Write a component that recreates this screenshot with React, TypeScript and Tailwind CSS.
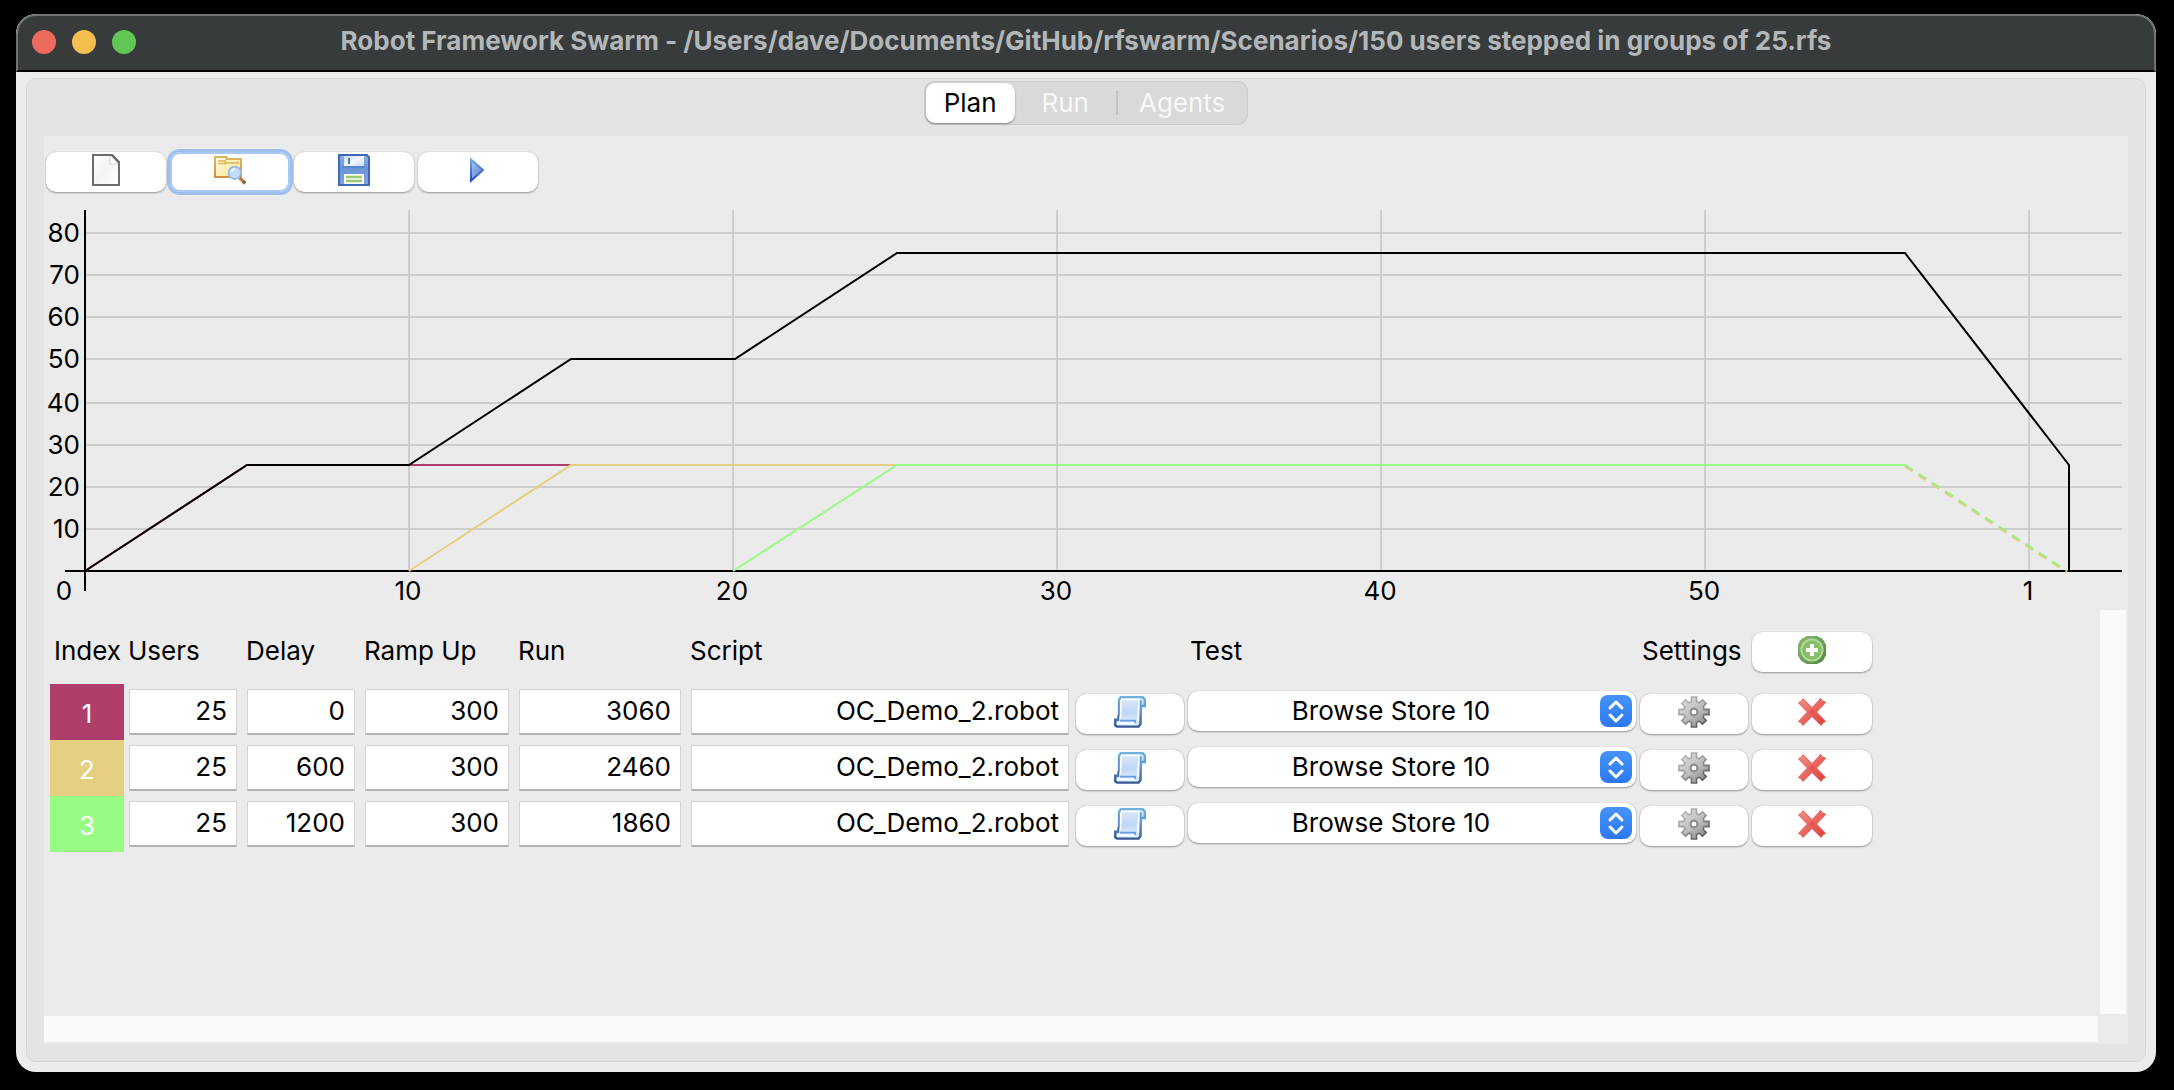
import React, { useState } from 'react';

type Row = {
  index: number;
  color: string;
  users: string;
  delay: string;
  rampUp: string;
  run: string;
  script: string;
  test: string;
};

const ROWS: Row[] = [
  { index: 1, color: 'bg-[#af3f6a]', users: '25', delay: '0', rampUp: '300', run: '3060', script: 'OC_Demo_2.robot', test: 'Browse Store 10' },
  { index: 2, color: 'bg-[#e5cf80]', users: '25', delay: '600', rampUp: '300', run: '2460', script: 'OC_Demo_2.robot', test: 'Browse Store 10' },
  { index: 3, color: 'bg-[#98fb84]', users: '25', delay: '1200', rampUp: '300', run: '1860', script: 'OC_Demo_2.robot', test: 'Browse Store 10' },
];

const TITLE =
  'Robot Framework Swarm - /Users/dave/Documents/GitHub/rfswarm/Scenarios/150 users stepped in groups of 25.rfs';

/* ---------- icons, all on a 16 unit grid ---------- */

function Icon({ children }: { children: React.ReactNode }) {
  return (
    <svg viewBox="0 0 16 16" className="size-8 shrink-0" aria-hidden="true">
      {children}
    </svg>
  );
}

function NewIcon() {
  return (
    <Icon>
      <defs>
        <linearGradient id="paper" x1="0" y1="0" x2="1" y2="1">
          <stop offset="0" stopColor="#ffffff" />
          <stop offset="0.5" stopColor="#f4f4f4" />
          <stop offset="1" stopColor="#ffffff" />
        </linearGradient>
      </defs>
      <path d="M1.5 0.5H11L14.5 4.2V15.5H1.5Z" fill="url(#paper)" stroke="#6c6c6c" />
      <path d="M10 1V5H14" fill="#ffffff" stroke="#e2e2e2" strokeWidth="0.8" />
      <path d="M11 0.5L14.5 4.2" stroke="#6c6c6c" strokeWidth="1.2" />
    </Icon>
  );
}

function OpenIcon() {
  return (
    <Icon>
      <defs>
        <linearGradient id="folder" x1="0" y1="0" x2="1" y2="1">
          <stop offset="0" stopColor="#fffbe8" />
          <stop offset="0.6" stopColor="#fbeeb0" />
          <stop offset="1" stopColor="#f0d46c" />
        </linearGradient>
        <linearGradient id="folderEdge" x1="0" y1="0" x2="0" y2="1">
          <stop offset="0" stopColor="#dcb95c" />
          <stop offset="1" stopColor="#cf8f41" />
        </linearGradient>
      </defs>
      <path d="M0.5 1.5H6.3V2.5H13.5V11.5H0.5Z" fill="url(#folder)" stroke="url(#folderEdge)" />
      <path d="M2 3.4H5.6V4.4H12V3.6" fill="none" stroke="#e3bd62" strokeWidth="0.9" />
      <path d="M2.2 4.8H6" stroke="#e3bd62" strokeWidth="0.9" />
      <path d="M12.8 12L15.4 14.4" stroke="#b98352" strokeWidth="1.8" />
      <path d="M14.4 13.6L15.6 14.8" stroke="#94653c" strokeWidth="1.6" />
      <circle cx="10.4" cy="9.4" r="3.1" fill="#c3dcf6" stroke="#98b9e0" strokeWidth="0.9" />
      <path d="M8.7 9A2 2 0 0 1 10.6 7.4" fill="none" stroke="#e8f3fd" strokeWidth="0.9" />
    </Icon>
  );
}

function SaveIcon() {
  return (
    <Icon>
      <defs>
        <linearGradient id="disk" x1="0" y1="0" x2="0" y2="1">
          <stop offset="0" stopColor="#8fb2e6" />
          <stop offset="0.45" stopColor="#6a94d8" />
          <stop offset="1" stopColor="#86a6dc" />
        </linearGradient>
        <linearGradient id="shutter" x1="0" y1="0" x2="1" y2="1">
          <stop offset="0" stopColor="#c9d8f0" />
          <stop offset="0.5" stopColor="#f3f7fd" />
          <stop offset="1" stopColor="#cddcf3" />
        </linearGradient>
      </defs>
      <path d="M0.5 0.5H14.4L15.5 1.6V15.5H0.5Z" fill="url(#disk)" stroke="#4068b4" />
      <path d="M3 1H13V6H3Z" fill="url(#shutter)" />
      <path d="M5 2H6V5H5Z" fill="#4a72bd" />
      <path d="M2.5 6.5H13.5" stroke="#5580cc" strokeWidth="0.7" />
      <path d="M3 10H13V15H3Z" fill="#fbfdf8" />
      <path d="M4 11.5H12M4 13.5H12" stroke="#9cc777" strokeWidth="1.2" />
    </Icon>
  );
}

function PlayIcon() {
  return (
    <Icon>
      <defs>
        <linearGradient id="play" x1="0" y1="0" x2="1" y2="1">
          <stop offset="0" stopColor="#a9c6f0" />
          <stop offset="1" stopColor="#4f83d8" />
        </linearGradient>
        <linearGradient id="playEdge" x1="0" y1="0" x2="0" y2="1">
          <stop offset="0" stopColor="#7aa4e3" />
          <stop offset="1" stopColor="#1d4fbf" />
        </linearGradient>
      </defs>
      <path d="M4.5 2.7L10.5 8L4.5 13.4Z" fill="url(#play)" stroke="url(#playEdge)" strokeWidth="1" />
    </Icon>
  );
}

function ScriptIcon() {
  return (
    <Icon>
      <defs>
        <linearGradient id="sheet" x1="0" y1="0" x2="0" y2="1">
          <stop offset="0" stopColor="#dcebfb" />
          <stop offset="0.5" stopColor="#bfd8f5" />
          <stop offset="1" stopColor="#e2eefb" />
        </linearGradient>
        <linearGradient id="sheetEdge" x1="0" y1="0" x2="0" y2="1">
          <stop offset="0" stopColor="#6fb0e0" />
          <stop offset="0.5" stopColor="#5b93cf" />
          <stop offset="1" stopColor="#34588f" />
        </linearGradient>
      </defs>
      <path
        d="M3.4 0.6H14.4L15.4 1.7V5H13.5L13.2 14.2L12.3 15.3H1.5L0.6 14.6V11.9H1.9L2.5 9L2.5 1.8Z"
        fill="url(#sheet)"
        stroke="url(#sheetEdge)"
        strokeWidth="1.2"
      />
      <path d="M3.5 1.7H13M3.5 2L3.2 11.5M12.4 2.6L12 12.4M2 13.6H11" stroke="#ffffff" strokeWidth="0.8" fill="none" />
      <path d="M3 12.3H10.6V13.6" stroke="#6d9be0" strokeWidth="0.9" fill="none" />
      <path d="M13.4 2.2V5" stroke="#5b9fd8" strokeWidth="0.9" />
    </Icon>
  );
}

function GearIcon() {
  return (
    <Icon>
      <defs>
        <linearGradient id="gear" gradientUnits="userSpaceOnUse" x1="2" y1="1" x2="13" y2="15">
          <stop offset="0" stopColor="#dedede" />
          <stop offset="0.55" stopColor="#bdbdbd" />
          <stop offset="1" stopColor="#8a8a8a" />
        </linearGradient>
        <linearGradient id="gearEdge" gradientUnits="userSpaceOnUse" x1="2" y1="1" x2="13" y2="15">
          <stop offset="0" stopColor="#bcbcbc" />
          <stop offset="0.5" stopColor="#989898" />
          <stop offset="1" stopColor="#505050" />
        </linearGradient>
      </defs>
      <path
        d="M6.7 0.5H9.3V2.9L10.6 3.4L12.2 1.9L14.1 3.8L12.6 5.4L13.1 6.7H15.5V9.3H13.1L12.6 10.6L14.1 12.2L12.2 14.1L10.6 12.6L9.3 13.1V15.5H6.7V13.1L5.4 12.6L3.8 14.1L1.9 12.2L3.4 10.6L2.9 9.3H0.5V6.7H2.9L3.4 5.4L1.9 3.8L3.8 1.9L5.4 3.4L6.7 2.9Z"
        fill="url(#gear)"
        stroke="url(#gearEdge)"
        strokeWidth="0.8"
      />
      <circle cx="8" cy="8" r="1.7" fill="#ffffff" stroke="#8e8e8e" strokeWidth="1.1" />
    </Icon>
  );
}

function DeleteIcon() {
  return (
    <Icon>
      <defs>
        <linearGradient id="cross" x1="0" y1="0" x2="1" y2="1">
          <stop offset="0" stopColor="#f3908a" />
          <stop offset="0.5" stopColor="#ea6661" />
          <stop offset="1" stopColor="#dc3a33" />
        </linearGradient>
      </defs>
      <path
        d="M3.6 1.2L4.6 2.4L8 5.8L11.4 2.2L12.2 1.1L13.2 2.4L14.8 3L13.8 4.4L10.3 8L13.8 11.6L14.8 12.8L13.4 13.4L12.6 14.8L11.4 13.6L8 10.3L4.6 13.6L3.4 14.8L2.6 13.4L1.2 12.8L2.4 11.4L5.7 8L2.2 4.5L1.2 3.4L2.6 2.6Z"
        fill="url(#cross)"
        stroke="#e4564f"
        strokeWidth="0.4"
      />
      <path d="M6.9 6.9H9.1V9.1H6.9Z" fill="#e9524d" />
    </Icon>
  );
}

function AddIcon() {
  return (
    <Icon>
      <defs>
        <linearGradient id="add" x1="0" y1="0" x2="1" y2="1">
          <stop offset="0" stopColor="#8aba76" />
          <stop offset="1" stopColor="#4d873c" />
        </linearGradient>
      </defs>
      <path
        d="M5.4 1H10.6L12.9 2.2L13.8 3.1L15 5.4V10.6L13.8 12.9L12.9 13.8L10.6 15H5.4L3.1 13.8L2.2 12.9L1 10.6V5.4L2.2 3.1L3.1 2.2Z"
        fill="url(#add)"
      />
      <circle cx="8" cy="8" r="5.3" fill="#86bd68" stroke="#b3d99b" strokeWidth="0.9" />
      <path d="M8 5V11M5 8H11" stroke="#ffffff" strokeWidth="2" />
    </Icon>
  );
}

/* ---------- controls ---------- */

const PUSH =
  'flex h-10 w-full items-center justify-center rounded-[10px] bg-white pb-1 shadow-[0_1px_2px_rgba(0,0,0,0.35),0_0_1px_rgba(0,0,0,0.25)]';

function PushButton({ label, children }: { label: string; children: React.ReactNode }) {
  return (
    <button type="button" aria-label={label} className={PUSH}>
      {children}
    </button>
  );
}

function Field({ label, value }: { label: string; value: string }) {
  return (
    <input
      aria-label={label}
      defaultValue={value}
      className="block h-[46px] w-full border border-b-2 border-[#d4d4d4] border-b-[#b2b2b2] bg-white px-[9px] pb-[2px] text-right outline-none"
    />
  );
}

function TestSelect({ label, value }: { label: string; value: string }) {
  return (
    <div className="relative mb-[2px]">
      <select
        aria-label={label}
        defaultValue={value}
        className="block h-10 w-full appearance-none rounded-[10px] bg-white pr-[42px] text-center [text-align-last:center] shadow-[0_1px_2px_rgba(0,0,0,0.35),0_0_1px_rgba(0,0,0,0.25)] outline-none"
      >
        <option>{value}</option>
      </select>
      <span className="pointer-events-none absolute top-1 right-1 flex size-8 items-center justify-center rounded-lg bg-linear-to-b from-[#4593f8] to-[#2d78f6]">
        <svg viewBox="0 0 32 32" className="size-8" fill="none" stroke="#ffffff" strokeWidth="3" strokeLinecap="round" strokeLinejoin="round" aria-hidden="true">
          <path d="M10 13L16 7L22 13M10 20L16 26L22 20" />
        </svg>
      </span>
    </div>
  );
}

/* ---------- chart ---------- */

const Y_TICKS = [
  { label: '80', y: 31 },
  { label: '70', y: 73 },
  { label: '60', y: 115 },
  { label: '50', y: 157 },
  { label: '40', y: 201 },
  { label: '30', y: 243 },
  { label: '20', y: 285 },
  { label: '10', y: 327 },
];

const X_TICKS = [
  { label: '10', x: 365 },
  { label: '20', x: 689 },
  { label: '30', x: 1013 },
  { label: '40', x: 1337 },
  { label: '50', x: 1661 },
  { label: '1', x: 1985 },
];

function PlanChart() {
  return (
    <svg viewBox="0 0 2084 408" className="block w-full text-[26px]" role="img" aria-label="Planned users over time">
      <g stroke="#cdcdcd" strokeWidth="2">
        {Y_TICKS.map((t) => (
          <path key={t.label} d={`M42 ${t.y}H2078`} />
        ))}
        {X_TICKS.map((t) => (
          <path key={t.label} d={`M${t.x} 8V369`} />
        ))}
      </g>
      <g stroke="#000000" strokeWidth="2">
        <path d="M21 369H2078" />
        <path d="M41 8V389" />
      </g>
      <g fill="none" strokeWidth="2">
        <path d="M41 369L203 263H1861" stroke="#af3f6a" />
        <path d="M365 369L527 263H1861" stroke="#e5cf80" />
        <path d="M1861 264L2023 370" stroke="#e5cf80" strokeWidth="3" strokeDasharray="9 7" />
        <path d="M689 369L853 263H1861" stroke="#98fb84" />
        <path d="M1861 263L2023 369" stroke="#98f080" strokeDasharray="9 7" />
        <path d="M41 369L203 263H365L527 157H691L853 51H1861L2025 263V369" stroke="#000000" />
      </g>
      <g fill="#000000">
        {Y_TICKS.map((t) => (
          <text key={t.label} x="36" y={t.y + 9} textAnchor="end">
            {t.label}
          </text>
        ))}
        {X_TICKS.map((t) => (
          <text key={t.label} x={t.x - 1} y="398" textAnchor="middle">
            {t.label}
          </text>
        ))}
        <text x="20" y="398" textAnchor="middle">
          0
        </text>
      </g>
    </svg>
  );
}

/* ---------- window ---------- */

const TABS = [
  { name: 'Plan', pad: 'px-[18px]' },
  { name: 'Run', pad: 'px-[27px]' },
  { name: 'Agents', pad: 'px-[21px]' },
];

function TabBar() {
  const [active, setActive] = useState('Plan');
  return (
    <div role="tablist" className="flex h-11 items-center rounded-[11px] bg-[#d9d9d9] p-[2px] shadow-[inset_0_0_2px_rgba(0,0,0,0.2)]">
      {TABS.map(({ name, pad }) => (
        <React.Fragment key={name}>
          {name === 'Agents' && <span className="h-6 w-[2px] bg-[#c2c2c2]" />}
          <button
            type="button"
            role="tab"
            aria-selected={name === active}
            onClick={() => setActive(name)}
            className={`h-10 rounded-[9px] ${pad} ${
              name === active ? 'bg-white text-black shadow-[0_1px_2px_rgba(0,0,0,0.4)]' : 'text-[#f8f8f8]'
            }`}
          >
            {name}
          </button>
        </React.Fragment>
      ))}
    </div>
  );
}

function Toolbar() {
  return (
    <div className="flex gap-1 px-[2px] pt-4">
      <div className="w-30">
        <PushButton label="New">
          <NewIcon />
        </PushButton>
      </div>
      <div className="w-30">
        <button
          type="button"
          aria-label="Open"
          className="flex h-10 w-full items-center justify-center rounded-[10px] bg-white pb-1 shadow-[0_0_0_3px_#9cbfee,inset_0_0_0_2px_#a9c9f4]"
        >
          <OpenIcon />
        </button>
      </div>
      <div className="w-30">
        <PushButton label="Save">
          <SaveIcon />
        </PushButton>
      </div>
      <div className="w-30">
        <PushButton label="Play">
          <PlayIcon />
        </PushButton>
      </div>
    </div>
  );
}

function ScenarioTable() {
  return (
    <table className="w-[1824px] table-fixed border-collapse text-left">
      <colgroup>
        <col className="w-[74px]" />
        <col className="w-[118px]" />
        <col className="w-[118px]" />
        <col className="w-[154px]" />
        <col className="w-[172px]" />
        <col className="w-[388px]" />
        <col className="w-[112px]" />
        <col className="w-[452px]" />
        <col className="w-[112px]" />
        <col className="w-[124px]" />
      </colgroup>
      <thead>
        <tr className="h-16 whitespace-nowrap [&>th]:p-0 [&>th]:pb-[2px] [&>th]:pl-1 [&>th]:font-normal">
          <th scope="col">Index</th>
          <th scope="col">Users</th>
          <th scope="col">Delay</th>
          <th scope="col">Ramp Up</th>
          <th scope="col">Run</th>
          <th scope="col">Script</th>
          <td />
          <th scope="col">Test</th>
          <th scope="col">Settings</th>
          <td className="px-[2px]">
            <PushButton label="Add">
              <AddIcon />
            </PushButton>
          </td>
        </tr>
      </thead>
      <tbody>
        {ROWS.map((r) => (
          <tr key={r.index} className="h-14">
            <th scope="row" className={`pt-1 text-center font-normal text-white ${r.color}`}>
              {r.index}
            </th>
            <td className="px-[5px]">
              <Field label={`Users ${r.index}`} value={r.users} />
            </td>
            <td className="px-[5px]">
              <Field label={`Delay ${r.index}`} value={r.delay} />
            </td>
            <td className="px-[5px]">
              <Field label={`Ramp up ${r.index}`} value={r.rampUp} />
            </td>
            <td className="px-[5px]">
              <Field label={`Run ${r.index}`} value={r.run} />
            </td>
            <td className="px-[5px]">
              <Field label={`Script ${r.index}`} value={r.script} />
            </td>
            <td className="px-[2px] pt-1">
              <PushButton label={`Choose script ${r.index}`}>
                <ScriptIcon />
              </PushButton>
            </td>
            <td className="px-[2px]">
              <TestSelect label={`Test ${r.index}`} value={r.test} />
            </td>
            <td className="px-[2px] pt-1">
              <PushButton label={`Settings ${r.index}`}>
                <GearIcon />
              </PushButton>
            </td>
            <td className="px-[2px] pt-1">
              <PushButton label={`Delete ${r.index}`}>
                <DeleteIcon />
              </PushButton>
            </td>
          </tr>
        ))}
      </tbody>
    </table>
  );
}

export default function App() {
  return (
    <div className="flex min-h-screen flex-col bg-black pt-[14px] pr-[18px] pb-[18px] pl-4 font-['Inter',sans-serif] text-[26px] leading-8 text-black">
      <div className="flex flex-1 flex-col overflow-hidden rounded-[20px] bg-[#ececec]">
        <header className="grid h-[58px] grid-cols-[1fr_auto_1fr] items-center rounded-t-[20px] border-2 border-[#6f7373] border-b-black bg-[#383b3c] px-[14px] pb-[2px]">
          <div className="flex gap-4">
            <button type="button" aria-label="Close" className="size-6 rounded-full bg-[#ed6a5f]" />
            <button type="button" aria-label="Minimize" className="size-6 rounded-full bg-[#f5bf4f]" />
            <button type="button" aria-label="Zoom" className="size-6 rounded-full bg-[#62c654]" />
          </div>
          <h1 className="pb-[2px] font-bold whitespace-nowrap text-[#b3b7b8]">{TITLE}</h1>
        </header>

        <main className="mx-[10px] mt-[6px] mb-[10px] flex flex-1 flex-col rounded-[10px] border border-[#d8d8d8] bg-[#e4e4e4] px-[17px] pb-[17px]">
          <div className="flex justify-center pt-[2px] pb-[11px]">
            <TabBar />
          </div>

          <section className="flex flex-1 flex-col bg-[#ebebeb]">
            <Toolbar />
            <div className="mt-[10px]">
              <PlanChart />
            </div>
            <div className="grid flex-1 grid-cols-[1fr_26px] grid-rows-[1fr_26px] gap-[2px] pr-[2px] pb-[2px]">
              <div className="overflow-hidden pt-[10px] pl-[6px]">
                <ScenarioTable />
              </div>
              <div className="bg-[#fafafa]" />
              <div className="bg-[#fafafa]" />
            </div>
          </section>
        </main>
      </div>
    </div>
  );
}
